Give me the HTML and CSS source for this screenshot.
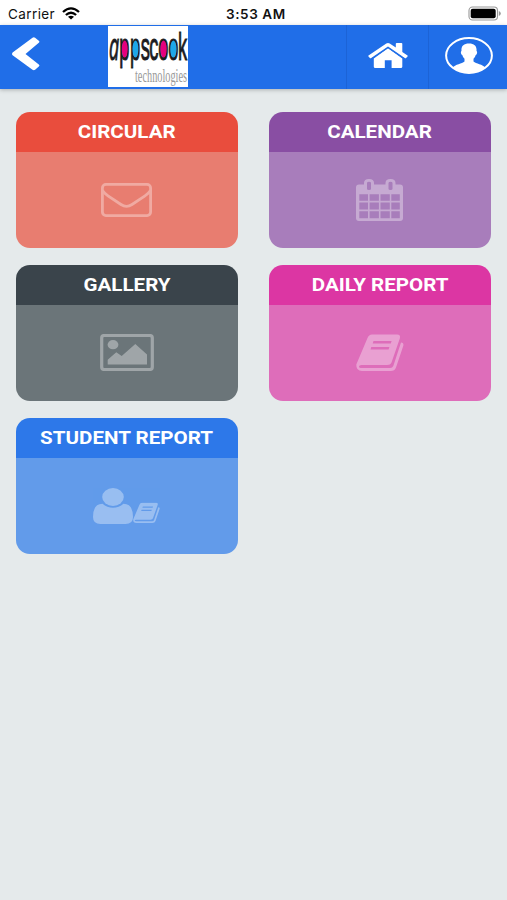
FILE: index.html
```html
<!DOCTYPE html>
<html lang="en">
<head>
    <meta charset="UTF-8">
    <meta name="viewport" content="width=device-width, initial-scale=1.0">
    <title>Appscook</title>
    <link rel="stylesheet" href="styles.css">
</head>
<body>
    <svg class="defs" width="0" height="0">
        <symbol id="book" viewBox="0 0 48 37" preserveAspectRatio="none">
            <path fill-rule="evenodd" d="M16 .5H41q4 0 2.800 4L35.500 28.500Q34.500 31 31 31H5.500Q3 31 3 32.500 3 34 6 34H34q2.500 0 3.300-2L45 8.500q2.800 0 2.400 3L40 33.500Q38.800 37 34.500 37H6Q0 37 .3 30.500L11.500 4Q12.800.5 16 .5z
                M17.500 7l-.8 2.500H34.800L35.600 7z M15.300 13l-.8 2.500H32.600L33.400 13z"/>
        </symbol>
    </svg>

    <div class="status-bar">
        <div class="carrier">
            <span class="carrier-name">Carrier</span>
            <svg class="wifi" width="18" height="13" viewBox="0 0 18 13" fill="none" stroke="#000" stroke-width="2.300">
                <path d="M1 5Q9-2.200 17 5"/>
                <path d="M3.900 8Q9 3.400 14.100 8"/>
                <path d="M9 12.500L6 9.800Q9 7.600 12 9.800z" fill="#000" stroke="none"/>
            </svg>
        </div>
        <div class="time"><span>3:53 AM</span></div>
        <svg class="battery" width="33" height="15" viewBox="0 0 33 15">
            <rect x="1" y="1" width="28.500" height="13" rx="3.500" fill="#fff" stroke="#999" stroke-width="1.100"/>
            <rect x="2.700" y="2.700" width="25" height="9.600" rx="2" fill="#000"/>
            <path d="M30.800 5q2 .8 2 2.500t-2 2.500z" fill="#999"/>
        </svg>
    </div>

    <div class="navbar">
        <a class="back">
            <svg width="28" height="34" viewBox="0 0 28 34" fill="#fff">
                <path d="M.6 15.600L20.500.8q1.300-.9 2.600 0l3.700 3q1.200 1 0 2L13.500 17 26.800 27.600q1.200 1 0 2l-3.700 3.200q-1.300.9-2.600 0L.6 18.200q-1.100-1.200 0-2.600z"/>
            </svg>
        </a>
        <div class="logo">
            <svg width="80" height="61" viewBox="0 0 80 61">
                <text class="logo-name" transform="scale(.47 1)" y="33.500" x="2 24 47 69.500 88 107 128 149"><tspan class="logo-a">a</tspan>ppscook</text>
                <ellipse cx="16.700" cy="23" rx="2.900" ry="8.600" fill="#e6007e"/>
                <ellipse cx="27.500" cy="23" rx="2.900" ry="8.600" fill="#1da7e8"/>
                <ellipse cx="55.500" cy="23" rx="3.100" ry="8.600" fill="#e6007e"/>
                <ellipse cx="65.400" cy="23" rx="3.100" ry="8.600" fill="#1da7e8"/>
                <text class="logo-sub" x="27" y="56" textLength="52" lengthAdjust="spacingAndGlyphs">technologies</text>
            </svg>
        </div>
        <a class="nav-item home">
            <svg width="40" height="26" viewBox="0 0 40 26" fill="#fff">
                <path d="M20 5.200L34.300 15.500V23.700q0 1.300-1.500 1.300H23.600V17.300H16.800V25H7.300q-1.500 0-1.500-1.300V15.500z"/>
                <path d="M.5 12.500L18.300.6q1.700-1.100 3.400 0L27.800 4.600V.8q0-.8.900-.8h4.700q.9 0 .9.800V9l5.200 3.500q.5.500 0 1l-1.400 1.500q-.6.500-1.300.1L20 3.600 3.200 15.100q-.7.400-1.300-.1L.5 13.500q-.5-.5 0-1z"/>
                <path d="M3.800 15.700L20 4.700 36.200 15.700" fill="none" stroke="#206ee8" stroke-width=".9"/>
            </svg>
        </a>
        <a class="nav-item user">
            <svg width="48" height="37" viewBox="0 0 48 37">
                <clipPath id="face"><ellipse cx="24" cy="18.500" rx="23" ry="17.500"/></clipPath>
                <ellipse cx="24" cy="18.500" rx="22.900" ry="17.400" fill="none" stroke="#fff" stroke-width="2"/>
                <path clip-path="url(#face)" fill="#fff" d="M24 6.500c5.500 0 8 2.700 7.500 7.500 1.200.8.500 3.500-.8 4-.5 1.700-1.300 2.800-2.200 3.700v2.800c2.500 2.500 9 2.500 12.500 6.500V38H7V31c3.500-4 10-4 12.500-6.500v-2.800c-.9-.9-1.700-2-2.200-3.700-1.300-.5-2-3.200-.8-4C16 9.200 18.500 6.500 24 6.500z"/>
            </svg>
        </a>
    </div>

    <div class="menu">
        <div class="card circular">
            <div class="card-title"><span>CIRCULAR</span></div>
            <div class="card-body">
                <svg width="51" height="34" viewBox="0 0 51 34" fill="none" stroke="#fff" stroke-width="2.800">
                    <rect x="1.400" y="1.400" width="48.200" height="31.200" rx="3.500"/>
                    <path d="M1.500 7.500Q3 10 7 12.800L20 21.500q5.500 3.600 11 0L44 12.800q4-2.800 5.500-5.300"/>
                </svg>
            </div>
        </div>
        <div class="card calendar">
            <div class="card-title"><span>CALENDAR</span></div>
            <div class="card-body">
                <svg width="47" height="42" viewBox="0 0 47 42" fill="#fff" fill-rule="evenodd">
                    <path d="M3 5.500H8V4q0-4 5-4t5 4v1.500h11.500V4q0-4 5-4t5 4v1.500H44q3 0 3 3V39q0 3-3 3H3q-3 0-3-3V8.500q0-3 3-3z
                        M11 4v6q0 1 2 1t2-1V4q0-1.200-2-1.200T11 4z M32.500 4v6q0 1 2 1t2-1V4q0-1.200-2-1.200T32.500 4z
                        M3.300 15.300h8.700v6.500H3.300z M13.600 15.300h9.300v6.500h-9.300z M24.500 15.300h9.300v6.500h-9.300z M35.300 15.300h8.500v6.500h-8.500z
                        M3.300 23.500h8.700v7H3.300z M13.600 23.500h9.300v7h-9.300z M24.500 23.500h9.300v7h-9.300z M35.300 23.500h8.500v7h-8.500z
                        M3.300 32.200h8.700v7H3.300z M13.600 32.200h9.300v7h-9.300z M24.500 32.200h9.300v7h-9.300z M35.300 32.200h8.500v7h-8.500z"/>
                </svg>
            </div>
        </div>
        <div class="card gallery">
            <div class="card-title"><span>GALLERY</span></div>
            <div class="card-body">
                <svg width="54" height="37" viewBox="0 0 54 37" fill="#fff">
                    <rect x="1.700" y="1.500" width="50.600" height="34" rx="2.500" fill="none" stroke="#fff" stroke-width="3.200"/>
                    <ellipse cx="13" cy="10.700" rx="5.400" ry="4.600"/>
                    <path d="M7.700 30.500V25.800L16.300 18.200 21.700 22 35.300 10 47 20.500V30.500z"/>
                </svg>
            </div>
        </div>
        <div class="card daily">
            <div class="card-title"><span>DAILY REPORT</span></div>
            <div class="card-body">
                <svg width="48" height="37" fill="#fff"><use href="#book" width="48" height="37"/></svg>
            </div>
        </div>
        <div class="card student">
            <div class="card-title"><span>STUDENT REPORT</span></div>
            <div class="card-body">
                <svg width="67" height="36" viewBox="0 0 67 36" fill="#fff">
                    <ellipse cx="20" cy="9" rx="10.800" ry="9"/>
                    <path d="M9.500 15.800q4.500 4 10.500 4t10.500-4Q40 16 40 29q0 7-7.500 7h-25Q0 36 0 29 0 16 9.500 15.800z"/>
                    <use href="#book" x="40" y="14.500" width="27" height="20.500"/>
                </svg>
            </div>
        </div>
    </div>
</body>
</html>
```

FILE: styles.css
```css
body {
    margin: 0;
    min-height: 900px;
    background-color: #e5eaeb;
    font-family: Roboto, Arial, sans-serif;
}
.defs {
    display: block;
}
.status-bar {
    display: flex;
    align-items: center;
    height: 25px;
    padding: 2px 6px 0 8px;
    box-sizing: border-box;
    background-color: #fff;
    color: #111;
    font-family: Inter, sans-serif;
    font-size: 13.5px;
}
.carrier {
    display: flex;
    align-items: center;
    width: 190px;
}
.carrier-name {
    width: 54px;
    letter-spacing: 0.4px;
}
.time {
    flex: 1;
    padding-left: 28px;
    font-weight: 600;
    letter-spacing: 0.6px;
}
.navbar {
    display: flex;
    height: 64px;
    background-color: #206ee8;
    box-shadow: 0 1px 4px rgba(0, 0, 0, 0.25);
}
.back {
    width: 96px;
    padding: 12px 0 0 12px;
}
.logo {
    width: 80px;
    height: 61px;
    margin-top: 1px;
    background-color: #fff;
}
.logo svg {
    display: block;
}
.logo-name {
    font-family: "Liberation Sans", Arial, sans-serif;
    font-size: 39px;
    fill: #1b1b20;
    stroke: #1b1b20;
    stroke-width: 1;
}
.logo-a {
    font-family: "Open Sans", sans-serif;
    font-size: 38px;
    font-style: italic;
}
.logo-sub {
    font-family: "Liberation Serif", serif;
    font-size: 19px;
    fill: #999;
}
.nav-item {
    display: flex;
    justify-content: center;
    box-sizing: border-box;
    border-left: 1px solid #1c63d6;
}
.home {
    width: 82px;
    margin-left: auto;
    padding-top: 18px;
}
.user {
    width: 79px;
    padding: 12px 0 0 1px;
}
.menu {
    display: grid;
    grid-template-columns: 1fr 1fr;
    grid-auto-rows: 136px;
    gap: 17.2px 31.5px;
    padding: 22.8px 16.5px 0 16px;
}
.card {
    border-radius: 14px;
    overflow: hidden;
}
.card-title {
    height: 40px;
    line-height: 40px;
    color: #fff;
    font-size: 17.5px;
    font-weight: bold;
    text-align: center;
    white-space: nowrap;
}
.card-title span {
    display: inline-block;
    transform: scaleX(1.175);
}
.card-body {
    display: flex;
    align-items: center;
    justify-content: center;
    height: 96px;
}
.card-body svg {
    opacity: 0.35;
}
.circular .card-title { background-color: #e94d3d; }
.circular .card-body { background-color: #e87d70; }
.calendar .card-title { background-color: #894ea3; }
.calendar .card-body { background-color: #a87dbb; }
.gallery .card-title { background-color: #3a444b; }
.gallery .card-body { background-color: #6b7579; }
.daily .card-title { background-color: #dc36a3; }
.daily .card-body { background-color: #de6dba; }
.student .card-title { background-color: #2d78e9; }
.student .card-body { background-color: #629bea; }
```
